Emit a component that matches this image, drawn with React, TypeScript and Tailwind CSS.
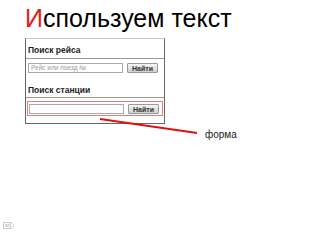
import React from 'react';

const SearchRow: React.FC<{ placeholder?: string }> = ({ placeholder }) => (
    <div className="flex items-center gap-[4px]">
        <div className="w-[95px] h-[10px] border border-[#a9a9a9] bg-white flex items-center px-[2px]">
            {placeholder && <span className="text-[6.5px] leading-none text-[#9a9a9a]">{placeholder}</span>}
        </div>
        <div className="w-[31px] h-[10px] border border-[#9a9a9a] rounded-[1px] bg-gradient-to-b from-[#f6f6f6] to-[#cfcfcf] flex items-center justify-center">
            <span className="text-[7px] leading-none font-bold text-[#333]">Найти</span>
        </div>
    </div>
);

export default function App() {
    return (
        <div className="relative w-[320px] h-[240px] bg-white flex flex-col font-['Liberation_Sans',Arial,sans-serif] text-black">
            <h1 className="pt-[3px] pl-[25px] text-[25px] leading-[30px]">
                <span className="text-[#e31b1b]">И</span>спользуем текст
            </h1>

            <div className="ml-[25px] mt-[5px] w-[140px] border border-[#666] border-t-[#c8c8c8] pb-[7px]">
                <div className="pt-[5px] pb-[2px] px-[2px] border-b border-[#9a9a9a]">
                    <div className="text-[8.5px] leading-[12px] font-bold text-[#222]">Поиск рейса</div>
                </div>
                <div className="mt-[4px] pl-[2px]">
                    <SearchRow placeholder="Рейс или поезд №" />
                </div>
                <div className="mt-[11px] pb-[1px] px-[2px] border-b border-[#9a9a9a]">
                    <div className="text-[8.5px] leading-[12px] font-bold text-[#222]">Поиск станции</div>
                </div>
                <div className="mt-[3px] ml-[1px] w-[136px] border border-[#ea7a7a] pl-[1px] pt-[2px] pb-[1px]">
                    <SearchRow />
                </div>
            </div>

            <div className="ml-[205px] mt-[5px] text-[10px] leading-[12px] text-[#222]">форма</div>

            <div className="mt-auto mb-[11px] ml-[3px] flex items-center">
                <div className="h-[7px] px-[1px] border border-[#ccc] flex items-center">
                    <span className="text-[4px] leading-none text-[#888]">32</span>
                </div>
                <svg width="3" height="7" viewBox="0 0 3 7">
                    <path d="M0 0 L3 3.5 L0 7" fill="none" stroke="#ccc" strokeWidth="1" />
                </svg>
            </div>

            <svg className="absolute inset-0 pointer-events-none" width="320" height="240">
                <line x1="100" y1="119" x2="197" y2="133" stroke="#e01010" strokeWidth="2" />
            </svg>
        </div>
    );
}
